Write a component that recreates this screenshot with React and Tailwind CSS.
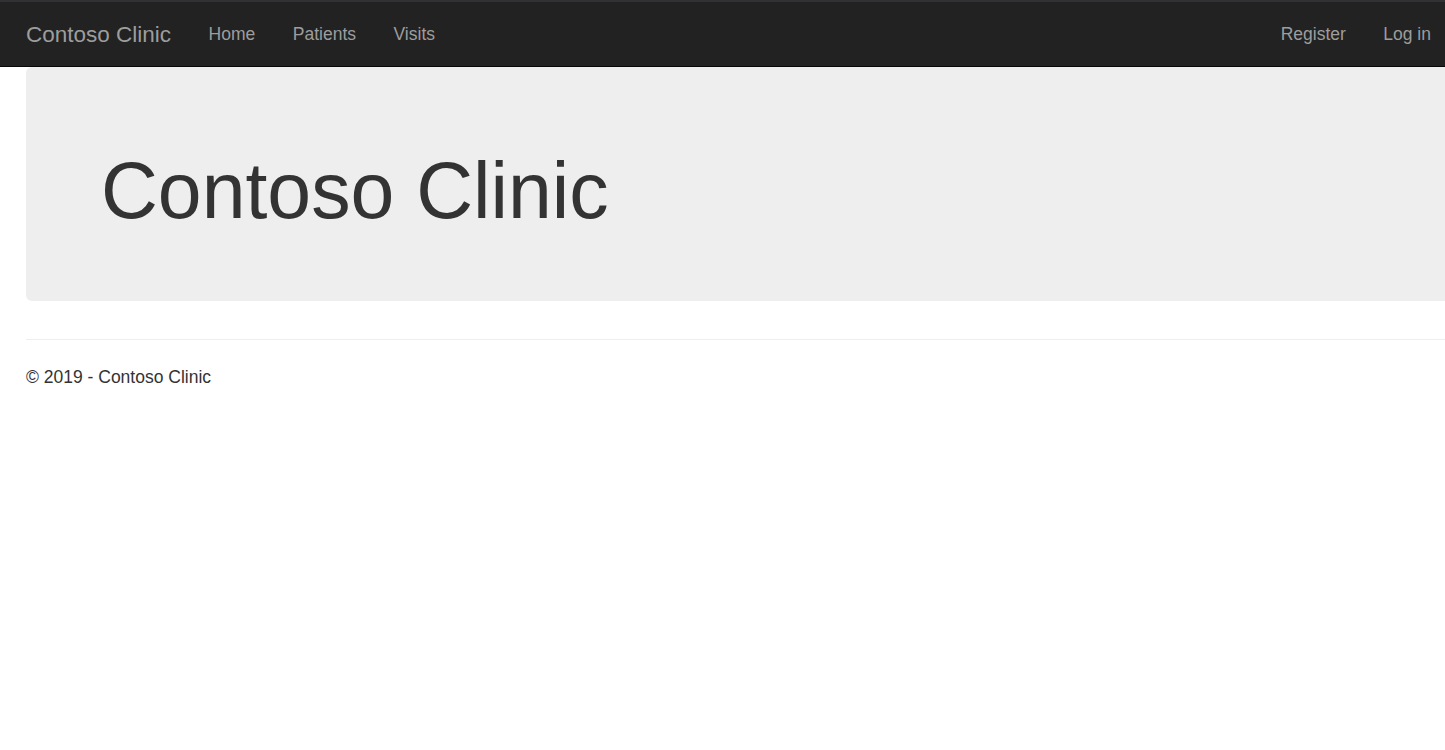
export default function App() {
  const font = { fontFamily: '"Liberation Sans", Arial, sans-serif' };
  return (
    <div className="min-h-[750px] w-[1445px] overflow-hidden bg-white text-[#333]" style={font}>
      <div className="h-[2px] bg-[#2f3134]" />
      <nav className="flex h-[65px] items-center border-b border-[#080808] bg-[#222] pt-[1px] text-[#9d9d9d]">
        <a className="pl-[26px] pr-[18.75px] text-[22.5px] leading-[25px]">Contoso Clinic</a>
        <a className="px-[18.75px] text-[17.5px] leading-[25px]">Home</a>
        <a className="px-[18.75px] text-[17.5px] leading-[25px]">Patients</a>
        <a className="px-[18.75px] text-[17.5px] leading-[25px]">Visits</a>
        <div className="ml-auto flex">
          <a className="px-[18.75px] text-[17.5px] leading-[25px]">Register</a>
          <a className="pl-[18.75px] pr-[14px] text-[17.5px] leading-[25px]">Log in</a>
        </div>
      </nav>
      <div className="pl-[26px]">
        <div className="h-[234px] rounded-l-[6px] bg-[#eee] pl-[75px] pt-[81px]">
          <h1 className="m-0 text-[78.75px] font-normal leading-[86.6px] text-[#333]">Contoso Clinic</h1>
        </div>
        <hr className="mt-[38px] border-0 border-t border-[#eee]" />
        <footer>
          <p className="mt-[24.5px] text-[17.5px] leading-[25px]">© 2019 - Contoso Clinic</p>
        </footer>
      </div>
    </div>
  );
}
